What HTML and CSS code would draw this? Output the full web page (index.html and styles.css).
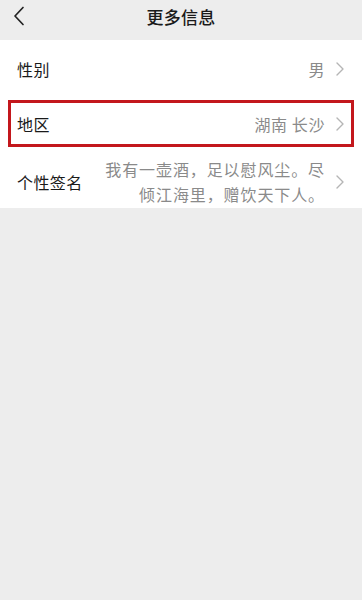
FILE: index.html
```html
<!DOCTYPE html>
<html lang="zh-CN">
  <head>
    <meta charset="UTF-8" />
    <meta name="viewport" content="width=device-width, initial-scale=1" />
    <title>更多信息</title>
    <link rel="stylesheet" href="styles.css">
  </head>
  <body>
    <header class="top-bar">
      <a class="back-btn" href="#" title="返回">
        <svg width="12" height="20" viewBox="0 0 12 20">
          <polyline points="10,1.5 2,10 10,18.5" fill="none" stroke="#222" stroke-width="1.7" stroke-linecap="round" stroke-linejoin="round" />
        </svg>
      </a>
      <h1 class="title">更多信息</h1>
    </header>

    <div class="info-list">
      <div class="info-row">
        <span class="label">性别</span>
        <span class="value">男</span>
        <svg class="arrow" width="8" height="14" viewBox="0 0 8 14">
          <polyline points="1,1 7,7 1,13" fill="none" stroke="#b5b5b5" stroke-width="1.4" stroke-linecap="round" stroke-linejoin="round" />
        </svg>
      </div>
      <div class="info-row marked">
        <span class="label">地区</span>
        <span class="value">湖南 长沙</span>
        <svg class="arrow" width="8" height="14" viewBox="0 0 8 14">
          <polyline points="1,1 7,7 1,13" fill="none" stroke="#b5b5b5" stroke-width="1.4" stroke-linecap="round" stroke-linejoin="round" />
        </svg>
      </div>
      <div class="info-row signature">
        <span class="label">个性签名</span>
        <span class="value">我有一壶酒，足以慰风尘。尽倾江海里，赠饮天下人。</span>
        <svg class="arrow" width="8" height="14" viewBox="0 0 8 14">
          <polyline points="1,1 7,7 1,13" fill="none" stroke="#b5b5b5" stroke-width="1.4" stroke-linecap="round" stroke-linejoin="round" />
        </svg>
      </div>
    </div>
  </body>
</html>
```

FILE: styles.css
```css
* {
  box-sizing: border-box;
}

body {
  margin: 0;
  padding: 0;
  background: #ededed;
  font-family: "Noto Sans CJK SC", "Noto Sans", sans-serif;
  color: #1a1a1a;
}

.top-bar {
  height: 40px;
  display: flex;
  align-items: flex-start;
  justify-content: center;
  position: relative;
  background: #ededed;
}

.back-btn {
  position: absolute;
  left: 13px;
  top: 6px;
  display: flex;
}

.title {
  margin: 0;
  font-size: 17px;
  font-weight: 500;
  line-height: 34px;
  letter-spacing: 0.3px;
}

.info-list {
  background: #ffffff;
}

.info-row {
  display: flex;
  align-items: center;
  height: 57px;
  padding: 0 18px 0 17px;
  font-size: 16px;
}

.info-row .label {
  flex-shrink: 0;
  letter-spacing: 0.4px;
}

.info-row .value {
  flex: 1;
  text-align: right;
  color: #8a8a8a;
  margin-right: 11px;
  letter-spacing: 0.6px;
}

.info-row .arrow {
  flex-shrink: 0;
}

/* red annotation box round the region row */
.info-row.marked {
  height: 47px;
  margin: 3px 8px;
  padding: 0 7px 0 6px;
  border: 3px solid #c3171c;
}

.info-row.signature {
  height: 58px;
  padding-top: 7px;
  padding-bottom: 1px;
}

.signature .value {
  margin-left: 20px;
  line-height: 25px;
  letter-spacing: 0.9px;
}
```
